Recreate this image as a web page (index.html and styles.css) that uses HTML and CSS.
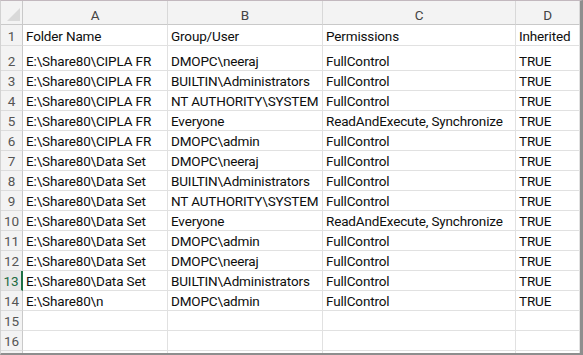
FILE: index.html
```html
<!DOCTYPE html>
<html lang="en">
<head>
<meta charset="utf-8">
<title>Share permissions</title>
<link rel="stylesheet" href="styles.css">
</head>
<body>
<div class="sheet">
  <div class="grid">
    <div class="corner"><span class="corner-tri"></span></div>
    <div class="colhead">A</div>
    <div class="colhead">B</div>
    <div class="colhead">C</div>
    <div class="colhead">D</div>

    <div class="rowhead r1">1</div>
    <div class="cell r1">Folder Name</div>
    <div class="cell r1">Group/User</div>
    <div class="cell r1">Permissions</div>
    <div class="cell r1">Inherited</div>

    <div class="rowhead r2">2</div>
    <div class="cell r2">E:\Share80\CIPLA FR</div>
    <div class="cell r2">DMOPC\neeraj</div>
    <div class="cell r2">FullControl</div>
    <div class="cell r2">TRUE</div>

    <div class="rowhead">3</div>
    <div class="cell">E:\Share80\CIPLA FR</div>
    <div class="cell">BUILTIN\Administrators</div>
    <div class="cell">FullControl</div>
    <div class="cell">TRUE</div>

    <div class="rowhead">4</div>
    <div class="cell">E:\Share80\CIPLA FR</div>
    <div class="cell">NT AUTHORITY\SYSTEM</div>
    <div class="cell">FullControl</div>
    <div class="cell">TRUE</div>

    <div class="rowhead">5</div>
    <div class="cell">E:\Share80\CIPLA FR</div>
    <div class="cell">Everyone</div>
    <div class="cell">ReadAndExecute, Synchronize</div>
    <div class="cell">TRUE</div>

    <div class="rowhead">6</div>
    <div class="cell">E:\Share80\CIPLA FR</div>
    <div class="cell">DMOPC\admin</div>
    <div class="cell">FullControl</div>
    <div class="cell">TRUE</div>

    <div class="rowhead">7</div>
    <div class="cell">E:\Share80\Data Set</div>
    <div class="cell">DMOPC\neeraj</div>
    <div class="cell">FullControl</div>
    <div class="cell">TRUE</div>

    <div class="rowhead">8</div>
    <div class="cell">E:\Share80\Data Set</div>
    <div class="cell">BUILTIN\Administrators</div>
    <div class="cell">FullControl</div>
    <div class="cell">TRUE</div>

    <div class="rowhead">9</div>
    <div class="cell">E:\Share80\Data Set</div>
    <div class="cell">NT AUTHORITY\SYSTEM</div>
    <div class="cell">FullControl</div>
    <div class="cell">TRUE</div>

    <div class="rowhead">10</div>
    <div class="cell">E:\Share80\Data Set</div>
    <div class="cell">Everyone</div>
    <div class="cell">ReadAndExecute, Synchronize</div>
    <div class="cell">TRUE</div>

    <div class="rowhead">11</div>
    <div class="cell">E:\Share80\Data Set</div>
    <div class="cell">DMOPC\admin</div>
    <div class="cell">FullControl</div>
    <div class="cell">TRUE</div>

    <div class="rowhead">12</div>
    <div class="cell">E:\Share80\Data Set</div>
    <div class="cell">DMOPC\neeraj</div>
    <div class="cell">FullControl</div>
    <div class="cell">TRUE</div>

    <div class="rowhead active">13</div>
    <div class="cell">E:\Share80\Data Set</div>
    <div class="cell">BUILTIN\Administrators</div>
    <div class="cell">FullControl</div>
    <div class="cell">TRUE</div>

    <div class="rowhead">14</div>
    <div class="cell">E:\Share80\n</div>
    <div class="cell">DMOPC\admin</div>
    <div class="cell">FullControl</div>
    <div class="cell">TRUE</div>

    <div class="rowhead">15</div>
    <div class="cell"></div>
    <div class="cell"></div>
    <div class="cell"></div>
    <div class="cell"></div>

    <div class="rowhead">16</div>
    <div class="cell"></div>
    <div class="cell"></div>
    <div class="cell"></div>
    <div class="cell"></div>

    <!-- next row, only its top sliver shows below the frame edge -->
    <div class="rowhead"></div>
    <div class="cell"></div>
    <div class="cell"></div>
    <div class="cell"></div>
    <div class="cell"></div>
  </div>
</div>
</body>
</html>
```

FILE: styles.css
```css
html, body {
  margin: 0;
  padding: 0;
  background: #ffffff;
}

.sheet {
  box-sizing: border-box;
  width: 583px;
  height: 355px;
  overflow: hidden;
  border-top: 1px solid #c2b8be;
  border-left: 1px solid #d2d2d2;
  border-right: 3px solid #8e8e8e;
  border-bottom: 2px solid #8e8e8e;
  font-family: Roboto, "Liberation Sans", sans-serif;
  font-size: 13.5px;
  letter-spacing: -0.15px;
  color: #0e0e0e;
}

.grid {
  display: grid;
  grid-template-columns: 22px 145px 155px 193px 64px;
  grid-auto-rows: 20px;
  grid-template-rows: 24px 21px 25px;
}

.grid > div {
  box-sizing: border-box;
  display: flex;
  align-items: flex-end;
  line-height: 18px;
  white-space: nowrap;
  overflow: hidden;
}

/* column letters */
.colhead {
  justify-content: center;
  background: #f3f3f3;
  color: #444444;
  border-right: 1px solid #d8d8d8;
  border-bottom: 1px solid #c9c9c9;
}

.corner {
  position: relative;
  background: #f3f3f3;
  border-right: 1px solid #c9c9c9;
  border-bottom: 1px solid #c9c9c9;
}

.corner-tri {
  position: absolute;
  right: 2px;
  bottom: 3px;
  width: 0;
  height: 0;
  border-left: 13px solid transparent;
  border-bottom: 13px solid #d9d9d9;
}

/* row numbers */
.rowhead {
  justify-content: center;
  background: #f3f3f3;
  color: #555555;
  letter-spacing: 0;
  border-right: 1px solid #c9c9c9;
  border-bottom: 1px solid #dcdcdc;
}

.rowhead.active {
  background: #e6e6e6;
  color: #1d6b42;
  border-right: 2px solid #1e7145;
}

/* data cells */
.cell {
  padding-left: 3px;
  border-right: 1px solid #e1e1e1;
  border-bottom: 1px solid #e1e1e1;
}
```
